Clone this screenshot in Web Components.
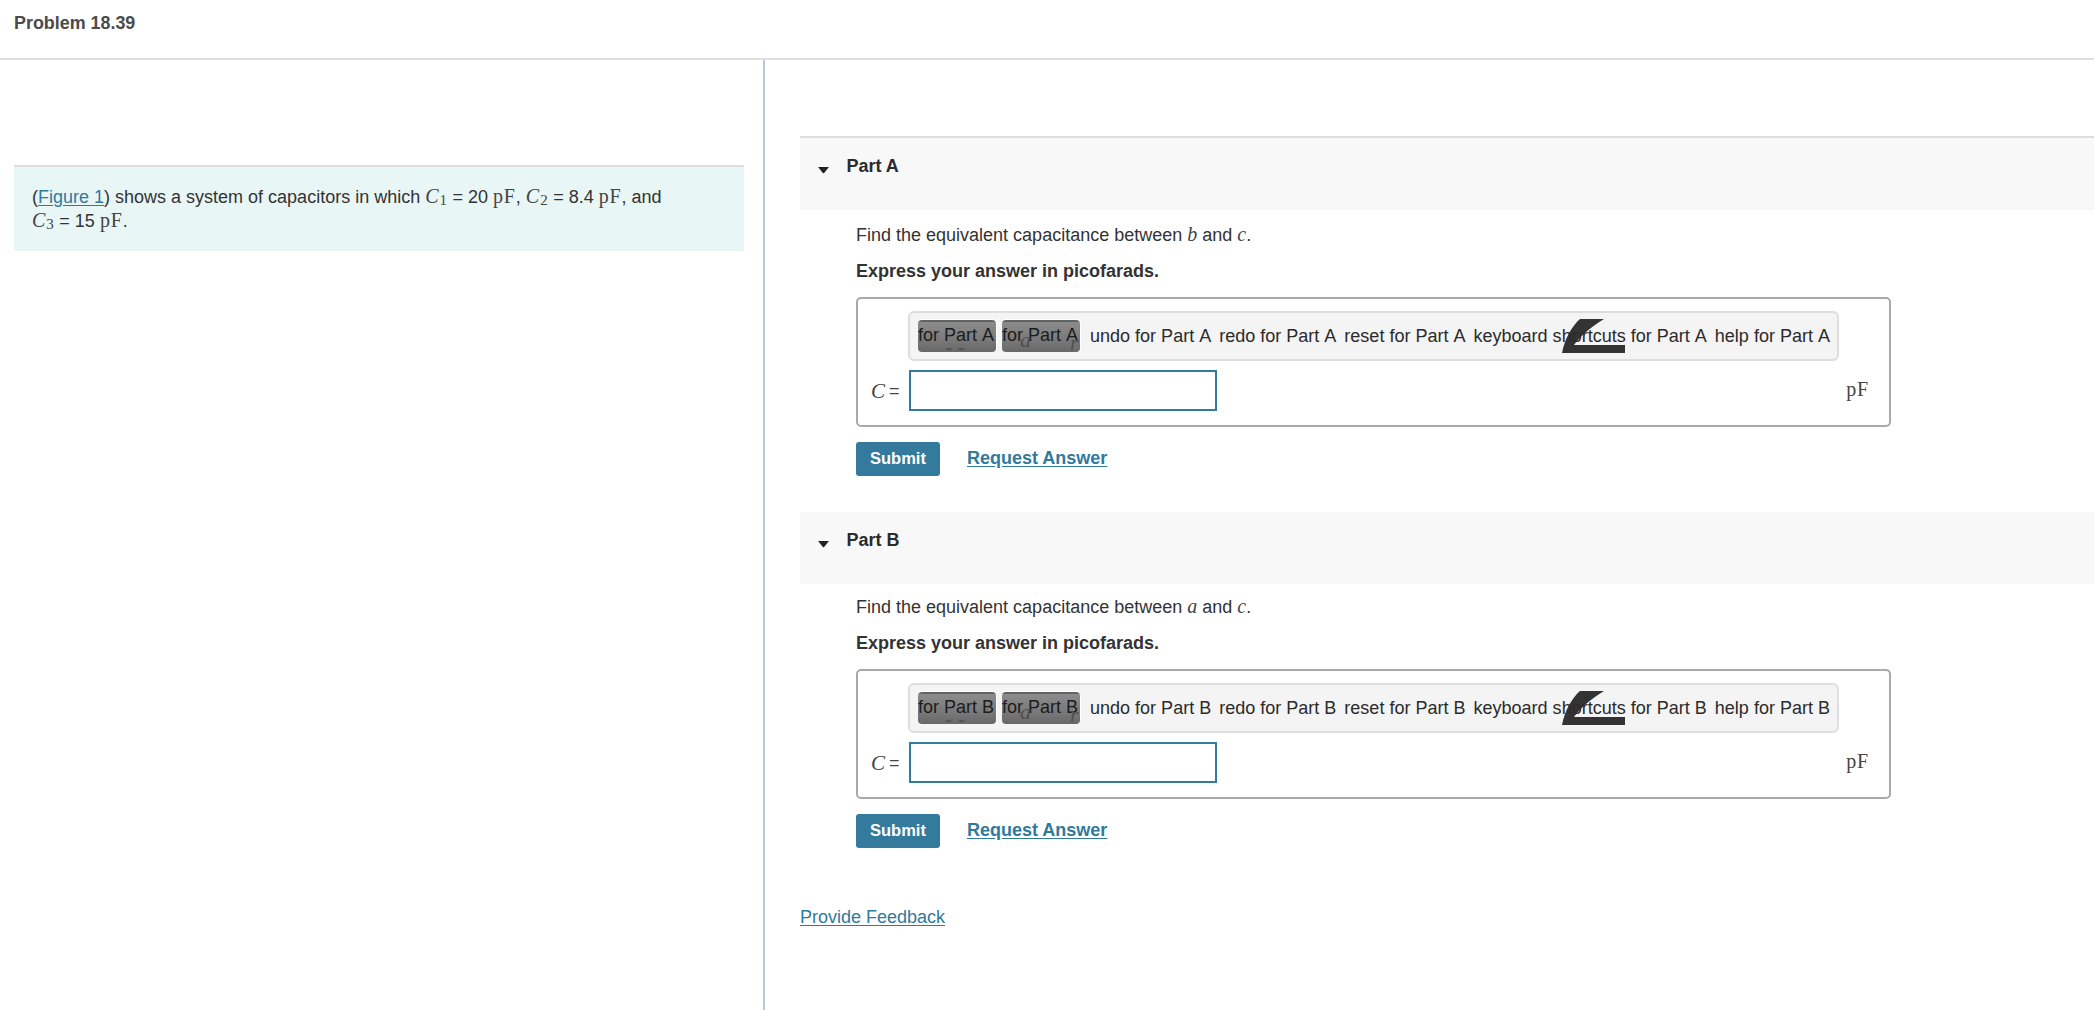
<!DOCTYPE html>
<html lang="en">
<head>
<meta charset="utf-8">
<title>Problem 18.39</title>
<style>
html,body{margin:0;padding:0;background:#fff}
body{font:18px/24px "Liberation Sans",Arial,sans-serif;color:#333;height:1010px;overflow:hidden}
</style>
</head>
<body>
<x-page>
  <x-topbar slot="top">Problem 18.39</x-topbar>
  <x-intro slot="left">
    (<x-link>Figure 1</x-link>) shows a system of capacitors in which <x-v sub="1">C</x-v> = 20 <x-u>pF</x-u>, <x-v sub="2">C</x-v> = 8.4 <x-u>pF</x-u>, and<br>
    <x-v sub="3">C</x-v> = 15 <x-u>pF</x-u>.
  </x-intro>
  <x-part slot="right" name="A" first>Find the equivalent capacitance between <x-v>b</x-v> and <x-v>c</x-v>.</x-part>
  <x-part slot="right" name="B">Find the equivalent capacitance between <x-v>a</x-v> and <x-v>c</x-v>.</x-part>
  <x-link slot="right" style="display:block;margin-top:57px;width:max-content">Provide Feedback</x-link>
</x-page>
<script>
function def(name, css, html){
  customElements.define(name, class extends HTMLElement{
    constructor(){
      super();
      this.attachShadow({mode:'open'});
    }
    connectedCallback(){
      this.shadowRoot.innerHTML='<style>'+css+'</style>'+(typeof html==='function'?html(this):html);
    }
  });
}
def('x-page',`
  :host{display:block}
  .main{display:grid;grid-template-columns:765px 1fr;height:950px}
  .left{border-right:2px solid #b9c7d8;padding:105px 19px 0 14px}
  .right{padding:76px 0 0 35px;min-width:0}
`,`<slot name="top"></slot><div class="main"><div class="left"><slot name="left"></slot></div><div class="right"><slot name="right"></slot></div></div>`);

def('x-topbar',`
  :host{display:block;box-sizing:border-box;height:60px;border-bottom:2px solid #dfdfdf;padding:11px 0 0 14px;font-weight:700;color:#4b4b4b;font-size:17.9px}
`,`<slot></slot>`);

def('x-intro',`
  :host{display:block;border-top:2px solid #dedede;background:#e8f6f6;padding:18px}
`,`<slot></slot>`);

def('x-link',`
  :host{color:#2f7a9d;text-decoration:underline;text-underline-offset:2px;cursor:pointer}
`,`<slot></slot>`);

def('x-v',`
  :host{font-family:"Liberation Serif","Times New Roman",serif;font-style:italic;font-size:20px;line-height:0;color:#444}
  sub{font-style:normal;font-size:15px;line-height:0;vertical-align:-2px;margin-left:1px;margin-right:.5px}
`,el=>`<slot></slot>${el.hasAttribute('sub')?`<sub>${el.getAttribute('sub')}</sub>`:''}`);

def('x-u',`
  :host{font-family:"Liberation Serif","Times New Roman",serif;font-size:20px;line-height:0;color:#444;letter-spacing:.8px}
`,`<slot></slot>`);

def('x-tool',`
  :host{display:block;position:relative;flex:none;white-space:nowrap}
  :host([btn]){box-sizing:border-box;width:78px;height:32px;border-radius:4px;overflow:hidden;
    background:linear-gradient(#636363 0,#636363 2px,#8c8c8c 2px,#7a7a7a 60%,#686868 100%);
    box-shadow:0 -1px 0 #fff,1px 0 0 #fff;line-height:31px;color:#1c1c1c}
  i{position:absolute;font:italic 22px/20px "Liberation Serif",serif;color:#505050}
`,el=>{
  const g=el.getAttribute('glyph');
  let extra='';
  if(g==='dash')extra=`<i style="left:27px;top:17px">- -</i>`;
  if(g==='ar')extra=`<i style="left:18px;top:10px">a</i><i style="left:68px;top:13px">r</i>`;
  return `<slot></slot>${extra}`;
});

def('x-toolbar',`
  :host{display:inline-flex;box-sizing:border-box;position:relative;height:50px;align-items:center;border:2px solid #dedede;border-radius:6px;background:#f4f4f4;padding:0 7px 0 8px;gap:8px;color:#2b2b2b;width:max-content;isolation:isolate;font-size:18.02px;font-kerning:none}
  .btns{display:flex;gap:6px;margin-right:2px}
  svg{position:absolute;left:652px;top:6px;z-index:-1}
`,el=>{
  const p='Part '+el.getAttribute('part-name');
  return `<div class="btns"><x-tool btn glyph="dash">for ${p}</x-tool><x-tool btn glyph="ar">for ${p}</x-tool></div>
  <x-tool>undo for ${p}</x-tool><x-tool>redo for ${p}</x-tool><x-tool>reset for ${p}</x-tool><x-tool>keyboard shortcuts for ${p}</x-tool><x-tool>help for ${p}</x-tool>
  <svg width="64" height="35" viewBox="0 0 64 35"><path fill="#333" d="M18 0H42C28 9 18 17 12 26H63V34H0C3 19 10 7 18 0Z"/></svg>`;
});

def('x-answer',`
  :host{display:block;box-sizing:border-box;width:1035px;height:130px;border:2px solid #a9a9a9;border-radius:5px;padding:12px 0 0 50px;margin-top:14px}
  .row{display:flex;align-items:center;height:41px;margin:9px 0 0 1px;position:relative}
  .lab{position:absolute;left:-38px;top:9px;white-space:nowrap;color:#444;display:flex;gap:4px;line-height:24px}
  .lab x-v{font-size:21px;line-height:24px}
  .box{box-sizing:border-box;width:308px;height:41px;border:2px solid #337a9c;background:#fff;display:block}
  .unit{margin:-1px 20px 0 auto}
`,el=>`<x-toolbar part-name="${el.getAttribute('part-name')}"></x-toolbar>
  <div class="row"><span class="lab"><x-v>C</x-v><span>=</span></span><span class="box" role="textbox"></span><span class="unit"><x-u>pF</x-u></span></div>`);

def('x-part',`
  :host{display:block;margin-bottom:36px}
  .head{display:flex;box-sizing:border-box;height:72px;background:#f8f8f8;padding:16px 0 0 18px;gap:17.5px;font-weight:700;color:#2b2b2b}
  :host([first]) .head{height:74px;border-top:2px solid #dedede}
  .caret{width:11px;height:6.5px;margin-top:13px;flex:none}
  .body{margin-left:56px;padding-top:11px}
  :host([first]) .body{padding-top:13px}
  .em{margin-top:12px;font-weight:700}
  .act{display:flex;align-items:center;margin-top:15px}
  .submit{box-sizing:border-box;width:84px;height:34px;background:#347a9c;color:#fff;font-weight:700;font-size:16.5px;border-radius:3px;text-align:center;line-height:33px;cursor:pointer}
  x-link{font-weight:700;margin:-2px 0 0 27px}
`,el=>{
  const n=el.getAttribute('name');
  return `<div class="head"><svg class="caret" viewBox="0 0 10 6"><path fill="#222" d="M0 0H10L5.6 5.6Q5 6 4.4 5.6Z"/></svg><span>Part ${n}</span></div>
  <div class="body"><div><slot></slot></div><div class="em">Express your answer in picofarads.</div>
  <x-answer part-name="${n}"></x-answer>
  <div class="act"><div class="submit">Submit</div><x-link>Request Answer</x-link></div></div>`;
});
</script>
</body>
</html>
